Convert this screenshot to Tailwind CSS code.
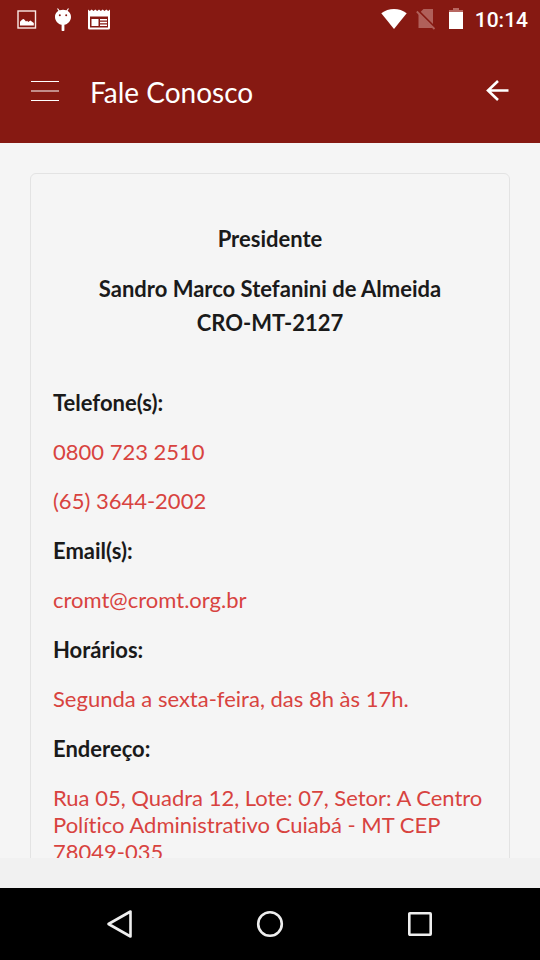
<!DOCTYPE html>
<html lang="pt-BR">
<head>
<meta charset="utf-8">
<meta name="viewport" content="width=device-width, initial-scale=1">
<title>Fale Conosco</title>
<script src="https://cdn.jsdelivr.net/npm/@tailwindcss/browser@4"></script>
</head>
<body class="flex h-screen flex-col overflow-hidden bg-[#f1f1f1] font-[Lato,sans-serif] text-[22px] leading-[27px] text-[#1a1a1a] [font-variant-ligatures:none]">
  <div class="flex h-[38px] shrink-0 items-center justify-between bg-[#861912] pr-3 pl-[17px] text-white">
    <div class="flex items-center">
      <svg class="h-6 w-5" viewBox="0 0 20 24" fill="none" aria-hidden="true">
        <rect x="1" y="4" width="17.5" height="17" stroke="#fbeae6" stroke-width="1.4"/>
        <path d="M3 18.500v-3.800l2.200-2.200 1.600-.6 2.200 2.500 1.200-.6 1 1.200 2.200-1.600 3.400 2.500v2.600z" fill="#fff"/>
      </svg>
      <svg class="ml-[17px] h-6 w-[18px]" viewBox="0 0 18 24" fill="#fff" aria-hidden="true">
        <path d="M3.500 1.500 6 5M14.500 1.500 12 5" stroke="#fff" stroke-width="1.200"/>
        <path d="M9 2.800c4.600 0 8 2.800 8 7.100 0 4-3.200 7.200-6.600 7.800v5.300a1.400 1.400 0 0 1-2.800 0v-5.300C4.200 17.100 1 13.900 1 9.900c0-4.300 3.400-7.100 8-7.100z"/>
        <circle cx="5.800" cy="8.300" r="1" fill="#861912"/><circle cx="12.200" cy="8.300" r="1" fill="#861912"/>
      </svg>
      <svg class="ml-4 h-6 w-[22px]" viewBox="0 0 22 24" fill="#fff" aria-hidden="true">
        <path fill-rule="evenodd" d="M0 2.500l1.800 1.500 1.900-1.500L5.500 4l1.800-1.500L9.200 4 11 2.500 12.800 4l1.900-1.500L16.500 4l1.800-1.500L20.200 4 22 2.500V21a1.500 1.500 0 0 1-1.500 1.500h-19A1.500 1.500 0 0 1 0 21zM2 9.500v11h18v-11z"/>
        <path d="M3.500 12h7v7h-7zM12 12h7v1.500h-7zM12 14.800h7v1.500h-7zM12 17.500h7V19h-7z"/>
      </svg>
    </div>
    <div class="flex items-center">
      <svg class="h-6 w-[26px]" viewBox="0 0 26 24" fill="#fff" aria-hidden="true"><path d="M.3 6.300C7.500.6 18.500.6 25.700 6.300L13 22z"/></svg>
      <svg class="ml-[9px] h-6 w-5" viewBox="0 0 20 24" aria-hidden="true">
        <path d="M7.500 2H17v19H2.500V7z" fill="#b0605a"/>
        <path d="M2 3.500 19 20.500" stroke="#861912" stroke-width="2"/>
        <path d="M.8 4.500 18.500 22" stroke="#b0605a" stroke-width="1.800"/>
      </svg>
      <svg class="ml-[13px] h-6 w-[14px]" viewBox="0 0 14 24" aria-hidden="true">
        <path d="M4 1h6v2h4v3H0V3h4z" fill="#b86761"/><path d="M0 5h14v17H0z" fill="#fff"/>
      </svg>
      <span class="ml-3 pt-px font-[Roboto,sans-serif] text-[21px] leading-6 font-medium">10:14</span>
    </div>
  </div>

  <header class="flex h-[105px] shrink-0 items-center bg-[#861912] px-[30px] text-white">
    <button type="button" aria-label="Menu" class="w-[30px]">
      <svg class="h-[30px] w-[30px]" viewBox="0 0 30 30" aria-hidden="true"><path d="M1 5.500h28M1 15h28M1 24.500h28" stroke="#fff" stroke-width="1.200"/></svg>
    </button>
    <h1 class="ml-[30px] flex-1 pt-0.5 text-[28px] leading-9">Fale Conosco</h1>
    <button type="button" aria-label="Voltar" class="w-6">
      <svg class="h-6 w-6" viewBox="0 0 24 24" fill="none" aria-hidden="true"><path d="M12 2 2 11.500l10 9.500M2 11.500h20.500" stroke="#fff" stroke-width="2.600"/></svg>
    </button>
  </header>

  <main class="mb-[30px] min-h-0 flex-1 overflow-hidden bg-[#f5f5f5] p-[30px]">
    <section class="rounded-md border border-[#e3e3e3] px-[22px] py-12">
      <div class="mb-[49px] text-center leading-[34px] font-bold">
        <h2 class="mb-4">Presidente</h2>
        <p>Sandro Marco Stefanini de Almeida<br>CRO-MT-2127</p>
      </div>
      <h3 class="mb-[22px] font-bold">Telefone(s):</h3>
      <p class="mb-[22px]"><a href="tel:08007232510" class="text-[#d8433f]">0800 723 2510</a></p>
      <p class="mb-[23px]"><a href="tel:+556536442002" class="text-[#d8433f]">(65) 3644-2002</a></p>
      <h3 class="mb-[22px] font-bold">Email(s):</h3>
      <p class="mb-[23px]"><a href="mailto:cromt@cromt.org.br" class="text-[#d8433f]">cromt@cromt.org.br</a></p>
      <h3 class="mb-[22px] font-bold">Horários:</h3>
      <p class="mb-[23px] text-[#d8433f]">Segunda a sexta-feira, das 8h às 17h.</p>
      <h3 class="mb-[22px] font-bold">Endereço:</h3>
      <p class="mb-[23px] text-[#d8433f]">Rua 05, Quadra 12, Lote: 07, Setor: A Centro Político Administrativo Cuiabá - MT CEP 78049-035</p>
    </section>
  </main>

  <nav class="flex h-[72px] shrink-0 items-center justify-center gap-[120px] bg-black" aria-label="Sistema">
    <button type="button" aria-label="Voltar"><svg class="h-[30px] w-[30px]" viewBox="0 0 30 30" fill="none" aria-hidden="true"><path d="M25.500 2.500v25L3.500 15z" stroke="#eee" stroke-width="2.600" stroke-linejoin="round"/></svg></button>
    <button type="button" aria-label="Início"><svg class="h-[30px] w-[30px]" viewBox="0 0 30 30" fill="none" aria-hidden="true"><circle cx="15" cy="15" r="11.800" stroke="#eee" stroke-width="2.600"/></svg></button>
    <button type="button" aria-label="Recentes"><svg class="h-[30px] w-[30px]" viewBox="0 0 30 30" fill="none" aria-hidden="true"><rect x="4.300" y="4.300" width="21.400" height="21.400" rx=".6" stroke="#eee" stroke-width="2.600"/></svg></button>
  </nav>
</body>
</html>
